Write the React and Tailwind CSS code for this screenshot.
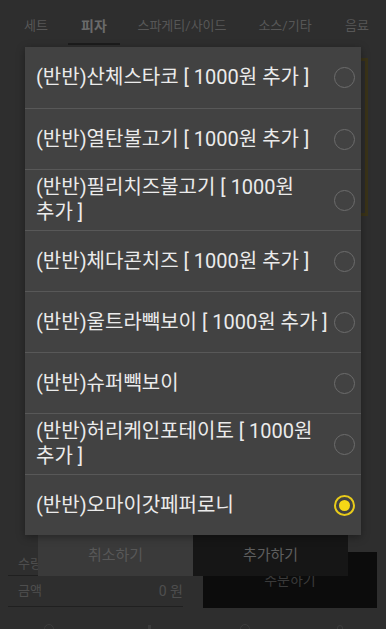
import React from 'react';

const tabs = ['세트', '피자', '스파게티/사이드', '소스/기타', '음료'];

const options = [
  { label: '(반반)산체스타코 [ 1000원 추가 ]' },
  { label: '(반반)열탄불고기 [ 1000원 추가 ]' },
  { label: '(반반)필리치즈불고기 [ 1000원 추가 ]' },
  { label: '(반반)체다콘치즈 [ 1000원 추가 ]' },
  { label: '(반반)울트라빽보이 [ 1000원 추가 ]' },
  { label: '(반반)슈퍼빽보이' },
  { label: '(반반)허리케인포테이토 [ 1000원 추가 ]' },
  { label: '(반반)오마이갓페퍼로니', selected: true },
];

const Radio = ({ checked }) =>
  checked ? (
    <div className="w-[21px] h-[21px] rounded-full border-2 border-[#e8cb1a] flex items-center justify-center shrink-0">
      <div className="w-[11px] h-[11px] rounded-full bg-[#f5d816]" />
    </div>
  ) : (
    <div className="w-[21px] h-[21px] rounded-full border-[1.5px] border-[#6c6c6c] shrink-0" />
  );

const App = () => {
  return (
    <div
      className="relative w-[386px] h-[629px] overflow-hidden bg-[#2e2e2e]"
      style={{ fontFamily: 'Roboto, "Noto Sans CJK KR", sans-serif' }}
    >
      {/* dimmed page underneath */}
      <div className="flex flex-col h-full">
        <div className="h-[44px] flex items-center pt-[8px] text-[13px] text-[#575757]">
          {tabs.map((t, i) => (
            <div
              key={t}
              className={
                i === 1
                  ? 'relative w-[52px] ml-[10px] text-center font-bold text-[14px] text-[#6a6a6a] h-[36px] leading-[36px]'
                  : i === 0
                  ? 'w-[44px] ml-[14px] text-center h-[36px] leading-[36px]'
                  : i === 2
                  ? 'w-[120px] ml-[2px] text-center h-[36px] leading-[36px]'
                  : i === 3
                  ? 'w-[86px] text-center h-[36px] leading-[36px]'
                  : 'w-[50px] ml-[4px] text-center h-[36px] leading-[36px]'
              }
            >
              {t}
              {i === 1 && <div className="absolute left-0 right-0 bottom-[-1px] h-[2px] bg-[#1c1c1c]" />}
            </div>
          ))}
        </div>

        <div className="flex-1" />

        {/* order summary */}
        <div className="flex px-[8px] gap-[20px] pb-[21px]">
          <div className="w-[175px] text-[13px] text-[#4e4e4e]">
            <div className="h-[28px] flex items-end pb-[2px] pl-[10px] border-b border-[#202020]">수량</div>
            <div className="h-[31px] flex items-center justify-between pl-[10px] border-b border-[#202020]">
              <span>금액</span>
              <span className="text-[14px]">0 원</span>
            </div>
          </div>
          <div className="w-[174px] mt-[4px] h-[56px] bg-[#0c0c0c] flex items-center justify-center text-[14px] text-[#3a3a3a]">
            주문하기
          </div>
        </div>
        <div className="h-0 relative">
          <div className="absolute left-[44px] top-[-5px] w-[10px] h-[10px] rounded-full border border-[#3c3c3c]" />
          <div className="absolute left-[148px] top-[-4px] w-[3px] h-[8px] bg-[#3c3c3c]" />
          <div className="absolute left-[240px] top-[-5px] w-[10px] h-[10px] rounded-full border border-[#3c3c3c]" />
          <div className="absolute left-[337px] top-[-4px] w-[6px] h-[8px] rounded-sm border border-[#3c3c3c]" />
        </div>
      </div>

      {/* option dialog behind the picker */}
      <div className="absolute left-[30px] top-[58px] w-[338px] h-[158px] border-[3px] border-[#3a3318] bg-[#2c2c2c]" />
      <div className="absolute left-[38px] top-[534px] w-[310px] h-[42px] flex text-[15px]">
        <div className="flex-1 bg-[#3a3a3a] flex items-center justify-center text-[#585858]">취소하기</div>
        <div className="flex-1 bg-[#161616] flex items-center justify-center text-[#5e5e5e]">추가하기</div>
      </div>

      {/* picker */}
      <div className="absolute left-[25px] top-[47px] w-[336px] bg-[#424242] shadow-[0_2px_8px_rgba(0,0,0,0.35)]">
        {options.map((o, i) => (
          <div
            key={o.label}
            className={`flex items-center min-h-[61px] pl-[11px] pr-[6px] ${i > 0 ? 'border-t border-[#585858]' : ''}`}
          >
            <div className="flex-1 text-[20px] leading-[25px] text-[#ebebeb] pr-[3px] break-keep">{o.label}</div>
            <Radio checked={o.selected} />
          </div>
        ))}
      </div>
    </div>
  );
};

export default App;
